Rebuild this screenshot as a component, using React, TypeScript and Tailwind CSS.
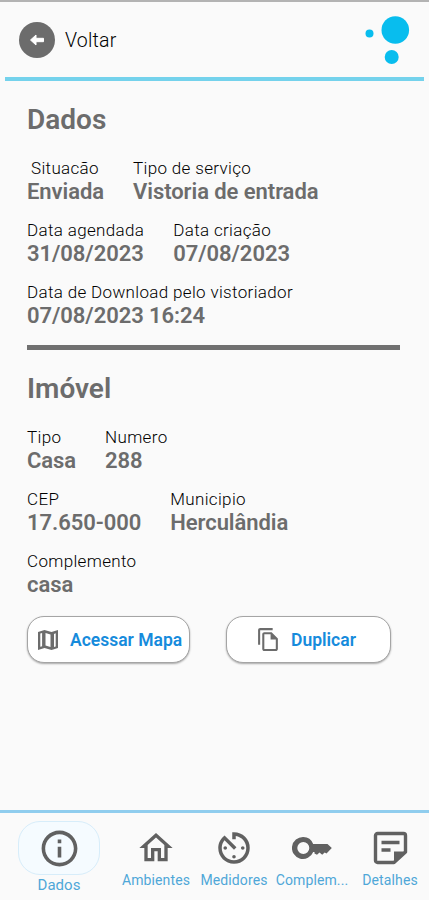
import React from 'react';
import {
  MdAvTimer,
  MdOutlineFileCopy,
  MdOutlineHome,
  MdOutlineInfo,
} from 'react-icons/md';

interface FieldProps {
  label: string;
  value: string;
  labelClass?: string;
}

const Field: React.FC<FieldProps> = ({ label, value, labelClass = '' }) => (
  <div className="flex flex-col whitespace-nowrap">
    <span className={`text-[17px] leading-[22px] tracking-[0.34px] font-light text-black ${labelClass}`}>{label}</span>
    <span className="text-[22px] leading-[26px] tracking-[-0.06px] font-semibold text-[#6c6c6c]">{value}</span>
  </div>
);

const MapIcon = () => (
  <svg className="w-[22px] h-[22px] shrink-0" viewBox="0 0 22 22" fill="#6c6c6c">
    <path
      fillRule="evenodd"
      d="M1 3 7.500 1l7 2L21 1v18l-6.500 2-7-2L1 21zM8.500 4v12.500l5 1.500V5.500zM3.300 4.600v13.200l1.800-.6V4zM17 4.900v13.200l1.700-.6V4.300z"
    />
  </svg>
);

const KeyIcon = () => (
  <svg className="w-10 h-9" viewBox="0 0 40 36" fill="#616161">
    <path
      fillRule="evenodd"
      d="M11.300 7a11 11 0 1 0 9.900 15h1.300v1.500l2.500 1.300 2.500-2.400 2.700 2.400 2.500-2.400 1.800 1.200 5.300-5.600-4.300-4H21.200a11 11 0 0 0-9.900-7zm0 5a6 6 0 1 1 0 12 6 6 0 0 1 0-12z"
    />
  </svg>
);

const NoteIcon = () => (
  <svg className="w-9 h-9" viewBox="0 0 36 36" fill="none" stroke="#616161" strokeWidth="3.4">
    <path d="M22 32.500H5.500a2 2 0 0 1-2-2v-25a2 2 0 0 1 2-2h26a2 2 0 0 1 2 2V22z" strokeLinejoin="round" />
    <path d="M22 32v-10.500H34z" fill="#616161" stroke="none" />
    <path d="M9.500 12.500h18M9.500 20h9" />
  </svg>
);

const tabs = [
  { label: 'Ambientes', icon: <MdOutlineHome className="w-10 h-10" /> },
  { label: 'Medidores', icon: <MdAvTimer className="w-[42px] h-[42px]" /> },
  { label: 'Complem...', icon: <KeyIcon /> },
  { label: 'Detalhes', icon: <NoteIcon /> },
];

const App: React.FC = () => {
  return (
    <div className="w-[429px] h-[900px] flex flex-col overflow-hidden bg-[#fafafa] border-t-2 border-[#b3b3b3] font-['Roboto',sans-serif]">
      {/* Header */}
      <header className="mx-[5px] h-[79px] shrink-0 flex items-start justify-between border-b-4 border-[#74d2ec]">
        <button className="flex items-center gap-[10px] ml-[14px] mt-5">
          <span className="w-9 h-9 rounded-full bg-[#6c6c6c] flex items-center justify-center">
            <svg className="w-4 h-4" viewBox="0 0 16 16" fill="#fff" stroke="#fff" strokeLinejoin="round">
              <path d="M1.500 8 7 3v3.300h7.500v3.400H7V13z" />
            </svg>
          </span>
          <span className="pt-px text-[19.500px] tracking-[0.2px] font-light text-black">Voltar</span>
        </button>
        <svg className="w-[46px] h-[52px] mt-3 mr-[14px]" viewBox="0 0 46 52" fill="#08bdee">
          <circle cx="5.500" cy="19.500" r="4" />
          <circle cx="31.300" cy="16" r="13.800" />
          <circle cx="27.700" cy="43" r="7" />
        </svg>
      </header>

      {/* Content */}
      <main className="flex-1 px-[27px] pt-[21px]">
        <h1 className="text-[28px] leading-9 font-semibold text-[#6c6c6c]">Dados</h1>
        <div className="mt-[19px] flex flex-col gap-3.5">
          <div className="flex gap-[29px]">
            <Field label="Situacão" value="Enviada" labelClass="ml-1" />
            <Field label="Tipo de serviço" value="Vistoria de entrada" />
          </div>
          <div className="flex gap-[29px]">
            <Field label="Data agendada" value="31/08/2023" />
            <Field label="Data criação" value="07/08/2023" />
          </div>
          <Field label="Data de Download pelo vistoriador" value="07/08/2023 16:24" />
        </div>

        <div className="mt-4 w-[373px] h-[5px] bg-[#707070]" />

        <h2 className="mt-[21px] text-[28px] leading-9 font-semibold text-[#6c6c6c]">Imóvel</h2>
        <div className="mt-[19px] flex flex-col gap-3.5">
          <div className="flex gap-[29px]">
            <Field label="Tipo" value="Casa" />
            <Field label="Numero" value="288" />
          </div>
          <div className="flex gap-[29px]">
            <Field label="CEP" value="17.650-000" />
            <Field label="Municipio" value="Herculândia" />
          </div>
          <Field label="Complemento" value="casa" />
        </div>

        <div className="mt-[18px] flex gap-9">
          <button className="w-[163px] h-[47px] rounded-[17px] border border-[#a5a5a5] bg-white shadow-[0_1px_2px_#0005] flex items-center pl-[9px] gap-[11px] text-[17.500px] font-semibold text-[#168bdc] whitespace-nowrap">
            <MapIcon />
            <span className="pt-px">Acessar Mapa</span>
          </button>
          <button className="w-[165px] h-[47px] rounded-[17px] border border-[#a5a5a5] bg-white shadow-[0_1px_2px_#0005] flex items-center pl-[29px] gap-[10px] text-[17.500px] font-semibold text-[#168bdc] whitespace-nowrap">
            <MdOutlineFileCopy className="w-[25px] h-[25px] shrink-0 text-[#6c6c6c]" />
            <span className="pt-px">Duplicar</span>
          </button>
        </div>
      </main>

      {/* Bottom navigation */}
      <nav className="h-[90px] shrink-0 flex border-t-[3px] border-[#90cdee] pl-[18px] text-[#616161]">
        <button className="w-[82px] mr-[17px] pt-[8px] flex flex-col items-center">
          <span className="w-[82px] h-[54px] rounded-[22px] border border-[#d7edfa] bg-[#f5fbff] flex items-center justify-center">
            <MdOutlineInfo className="w-[43px] h-[43px]" />
          </span>
          <span className="text-[15px] leading-5 text-[#4fa7d8]">Dados</span>
        </button>
        {tabs.map((tab) => (
          <button key={tab.label} className="w-[78px] pt-[15px] flex flex-col items-center shrink-0">
            <span className="h-10 flex items-center justify-center">{tab.icon}</span>
            <span className="mt-[2px] text-[14px] leading-5 tracking-[0.12px] text-[#4fa7d8]">{tab.label}</span>
          </button>
        ))}
      </nav>
    </div>
  );
};

export default App;
